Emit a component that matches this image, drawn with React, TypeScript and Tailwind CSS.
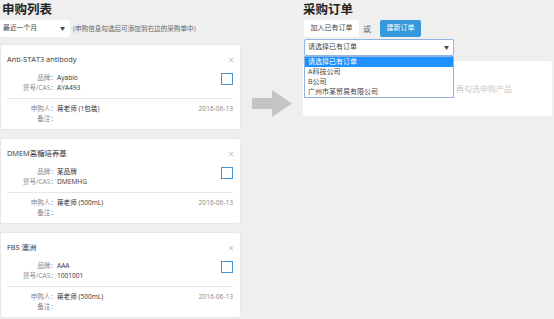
import React from "react";

const font = { fontFamily: '"Open Sans","Noto Sans CJK SC",sans-serif' };

type Item = { title: string; brand: string; cas: string; req: string; date: string };

const items: Item[] = [
  { title: "Anti-STAT3 antibody", brand: "Ayabio", cas: "AYA493", req: "蒋老师 (1包装)", date: "2016-06-13" },
  { title: "DMEM高糖培养基", brand: "某品牌", cas: "DMEMHG", req: "蒋老师 (500mL)", date: "2016-06-13" },
  { title: "FBS 澳洲", brand: "AAA", cas: "1001001", req: "蒋老师 (500mL)", date: "2016-06-13" },
];

function Card({ it }: { it: Item }) {
  return (
    <div className="relative bg-white rounded-[2px] shadow-[0_0_2px_rgba(0,0,0,0.12)] h-[84px] pl-[6px] pr-[7px] shrink-0">
      <div className="flex justify-between items-center pt-[9px] h-[19px]">
        <span className="text-[7.4px] leading-[10px] text-[#333]">{it.title}</span>
        <span className="text-[10px] leading-[10px] text-[#c0c0c0] mr-[-1px] mt-[2px]">×</span>
      </div>
      <div className="flex justify-between mt-[9px]">
        <div className="text-[6.6px] leading-[10px]">
          <div className="flex">
            <span className="w-[50px] text-right text-[#888]">品牌：</span>
            <span className="text-[#333]">{it.brand}</span>
          </div>
          <div className="flex">
            <span className="w-[50px] text-right text-[#888]">货号/CAS：</span>
            <span className="text-[#333]">{it.cas}</span>
          </div>
        </div>
        <div className="w-[12px] h-[12px] border-[1.5px] border-[#4a93cf] mt-[0px]" />
      </div>
      <div className="border-t border-[#e6e6e6] mt-[5px]" />
      <div className="mt-[5px] text-[6.6px] leading-[10px]">
        <div className="flex justify-between">
          <div className="flex">
            <span className="w-[50px] text-right text-[#888]">申购人：</span>
            <span className="text-[#333]">{it.req}</span>
          </div>
          <span className="text-[#888]">{it.date}</span>
        </div>
        <div className="flex">
          <span className="w-[50px] text-right text-[#888]">备注：</span>
        </div>
      </div>
    </div>
  );
}

export default function App() {
  return (
    <div style={font} className="w-[554px] h-[319px] bg-[#efefef] overflow-hidden flex">
      {/* left */}
      <div className="w-[240px] pl-[1px] shrink-0 flex flex-col">
        <div className="h-[20px] leading-[20px] text-[12.5px] font-bold text-[#222] pl-[1px]">申购列表</div>
        <div className="flex items-center h-[17px] ml-[-1px]">
          <div className="w-[70px] h-[17px] bg-white rounded-[2px] flex items-center justify-between pl-[3px] pr-[5px]">
            <span className="text-[6.8px] text-[#444]">最近一个月</span>
            <span className="text-[5px] text-[#444]">▼</span>
          </div>
          <span className="ml-[3px] text-[6.6px] text-[#666]">(申购信息勾选后可添加到右边的采购单中)</span>
        </div>
        <div className="flex flex-col gap-[10px] mt-[8px]">
          {items.map((it, i) => (
            <Card key={i} it={it} />
          ))}
        </div>
      </div>
      {/* arrow */}
      <div className="w-[63px] shrink-0 pt-[90px] pl-[12px]">
        <svg width="40" height="27" viewBox="0 0 40 27">
          <polygon points="0,8 20,8 20,0 40,13.5 20,27 20,19 0,19" fill="#c4c4c4" />
        </svg>
      </div>
      {/* right */}
      <div className="w-[249px] shrink-0 flex flex-col">
        <div className="h-[20px] leading-[20px] text-[12.5px] font-bold text-[#222]">采购订单</div>
        <div className="flex items-center h-[17px] pl-[1px]">
          <div className="w-[55px] h-[17px] bg-white rounded-[2px] flex items-center justify-center text-[7px] text-[#444]">加入已有订单</div>
          <span className="ml-[4px] text-[8px] text-[#666]">或</span>
          <div className="ml-[9px] w-[41px] h-[17px] bg-[#3498db] rounded-[2px] flex items-center justify-center text-[7px] text-white">建新订单</div>
        </div>
        <div className="relative mt-[2px] ml-[1px] w-[150px] z-10">
          <div className="h-[17px] bg-white border border-[#8fb6e0] rounded-[2px] flex items-center justify-between pl-[3px] pr-[4px]">
            <span className="text-[7px] text-[#444]">请选择已有订单</span>
            <span className="text-[5px] text-[#444]">▼</span>
          </div>
          <div className="absolute left-0 top-[17px] w-[150px] bg-white border border-[#8fb6e0] text-[7px] leading-[10px] text-[#444]">
            <div className="bg-[#1e90ff] text-white pl-[3px]">请选择已有订单</div>
            <div className="pl-[3px]">A科技公司</div>
            <div className="pl-[3px]">B公司</div>
            <div className="pl-[3px]">广州市某贸易有限公司</div>
          </div>
        </div>
        <div className="mt-[5px] h-[55px] bg-white rounded-[2px] flex items-center pl-[97px] text-[8px] text-[#c8c8c8]">
          请先选择订单，再勾选申购产品
        </div>
      </div>
    </div>
  );
}
